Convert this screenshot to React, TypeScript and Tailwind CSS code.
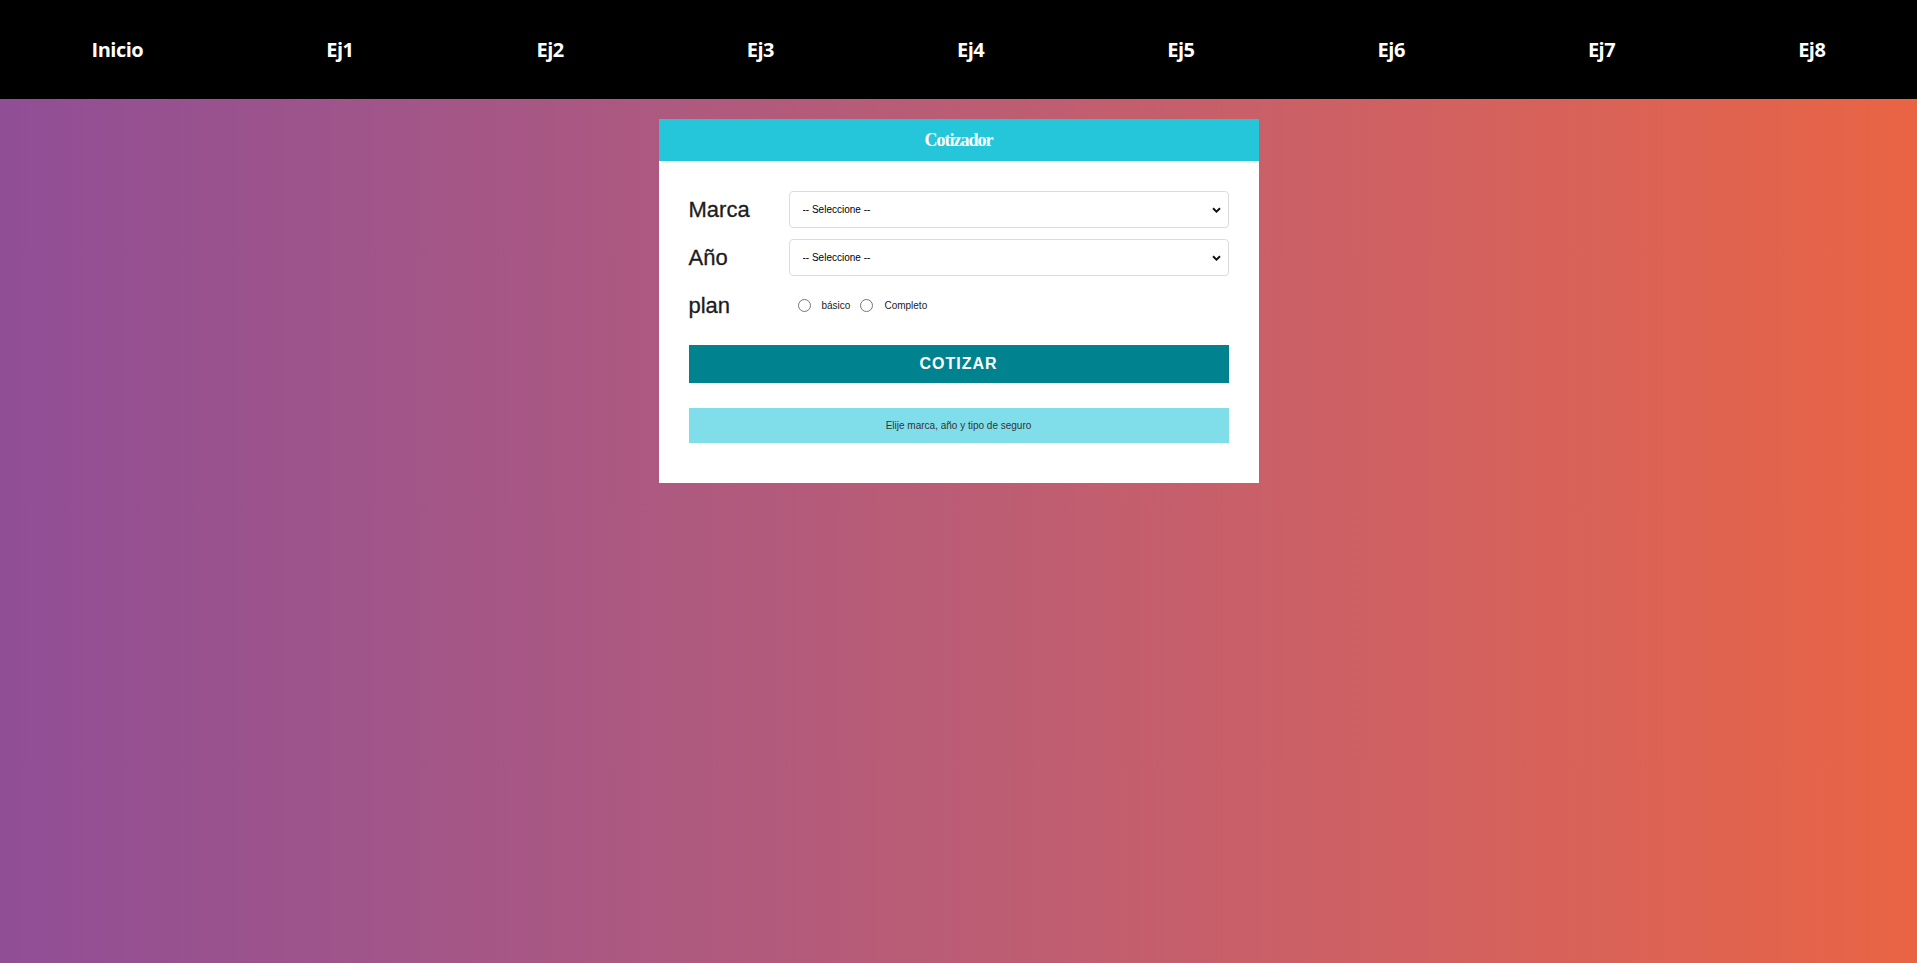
import React from "react";

const links = ["Inicio", "Ej1", "Ej2", "Ej3", "Ej4", "Ej5", "Ej6", "Ej7", "Ej8"];

function Chevron() {
  return (
    <svg
      className="pointer-events-none absolute right-[8px] top-1/2 -translate-y-1/2"
      width="9"
      height="6"
      viewBox="0 0 9 6"
      fill="none"
    >
      <path d="M1 1.2 L4.5 4.6 L8 1.2" stroke="#111" strokeWidth="2" />
    </svg>
  );
}

function SelectField({ label }: { label: string }) {
  return (
    <div className="flex h-[37px] items-center">
      <label className="w-[100px] text-[22px] leading-none text-[#1c1c1c] [font-family:'Liberation_Sans',Arial,sans-serif] [-webkit-text-stroke:0.3px_#1c1c1c]">
        {label}
      </label>
      <div className="relative h-full flex-1">
        <select className="h-full w-full appearance-none rounded-[4px] border border-[#dcdcdc] bg-white pl-[13px] text-[10px] text-black [font-family:'Liberation_Sans',Arial,sans-serif] outline-none">
          <option>-- Seleccione --</option>
        </select>
        <Chevron />
      </div>
    </div>
  );
}

function Radio({ label }: { label: string }) {
  return (
    <label className="flex items-center">
      <span className="mr-[11px] inline-block h-[13px] w-[13px] rounded-full border border-[#767676] bg-white" />
      <span className="mr-[10px] text-[10px] text-[#222] [font-family:'Liberation_Sans',Arial,sans-serif]">{label}</span>
    </label>
  );
}

export default function App() {
  return (
    <div className="min-h-[963px] bg-gradient-to-r from-[#904e95] to-[#e96443] [font-family:'Liberation_Sans',Arial,sans-serif]">
      <nav className="flex h-[99px] items-center justify-around bg-black">
        {links.map((l) => (
          <a
            key={l}
            className="text-[20px] font-bold text-white [font-family:'Open_Sans',sans-serif] tracking-[-0.5px]"
          >
            {l}
          </a>
        ))}
      </nav>

      <div className="mx-auto mt-[20px] w-[600px] bg-white">
        <div className="flex h-[42px] items-center justify-center bg-[#26c6da]">
          <h1 className="text-[18px] font-bold tracking-[-1px] text-white [font-family:'Liberation_Serif',serif]">
            Cotizador
          </h1>
        </div>

        <div className="px-[30px] pb-[40px] pt-[30px]">
          <SelectField label="Marca" />
          <div className="mt-[11px]">
            <SelectField label="Año" />
          </div>
          <div className="mt-[11px] flex h-[37px] items-center">
            <span className="w-[109px] text-[22px] leading-none text-[#1c1c1c] [font-family:'Liberation_Sans',Arial,sans-serif] [-webkit-text-stroke:0.3px_#1c1c1c]">
              plan
            </span>
            <Radio label="básico" />
            <Radio label="Completo" />
          </div>

          <button className="mt-[21px] flex h-[38px] w-full items-center justify-center bg-[#00838f] text-[16px] font-bold uppercase tracking-[1px] text-white">
            Cotizar
          </button>

          <div className="mt-[25px] flex h-[35px] items-center justify-center bg-[#80deea] text-[10px] text-[#333]">
            Elije marca, año y tipo de seguro
          </div>
        </div>
      </div>
    </div>
  );
}
